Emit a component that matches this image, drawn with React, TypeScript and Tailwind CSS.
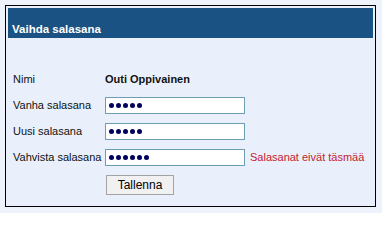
import React from "react";

const font = { fontFamily: '"Liberation Sans", Arial, sans-serif' };

function Dots({ count }: { count: number }) {
  return (
    <div className="flex h-[17px] w-[140px] items-center gap-[2px] border border-[#6c9db3] bg-white pl-[3px]">
      {Array.from({ length: count }).map((_, i) => (
        <span key={i} className="h-[5px] w-[5px] rounded-full bg-[#00005e]" />
      ))}
    </div>
  );
}

function Row({ label, children }: { label: string; children: React.ReactNode }) {
  return (
    <div className="flex h-[17px] items-center">
      <div className="w-[92px] text-[11px] leading-none text-[#111]">{label}</div>
      {children}
    </div>
  );
}

export default function App() {
  return (
    <div className="h-[213px] w-[382px] bg-[#edf2fb] pl-[5px] pt-[5px]" style={font}>
      <div className="box-border h-[202px] w-[371px] border border-black bg-[#e9f0fc] p-[2px]">
        <div className="box-border h-[30px] bg-[#1a5283] pl-[4px] pt-[14px] text-[11.5px] font-bold leading-[14px] text-white">
          Vaihda salasana
        </div>

        {/* Form */}
        <div className="mt-[33px] flex flex-col gap-[9px] pl-[5px]">
          <Row label="Nimi">
            <span className="text-[11px] font-bold leading-none text-[#111]">Outi Oppivainen</span>
          </Row>
          <Row label="Vanha salasana">
            <Dots count={5} />
          </Row>
          <Row label="Uusi salasana">
            <Dots count={5} />
          </Row>
          <Row label="Vahvista salasana">
            <Dots count={6} />
            <span className="ml-[5px] text-[11px] leading-none text-[#c4232e]">Salasanat eivät täsmää</span>
          </Row>
        </div>

        <div className="mt-[6px] pl-[98px]">
          <button className="box-border h-[20px] w-[68px] border border-[#a3a3a3] bg-[#f1f1f1] text-[12px] leading-none text-black">
            Tallenna
          </button>
        </div>
      </div>
    </div>
  );
}
